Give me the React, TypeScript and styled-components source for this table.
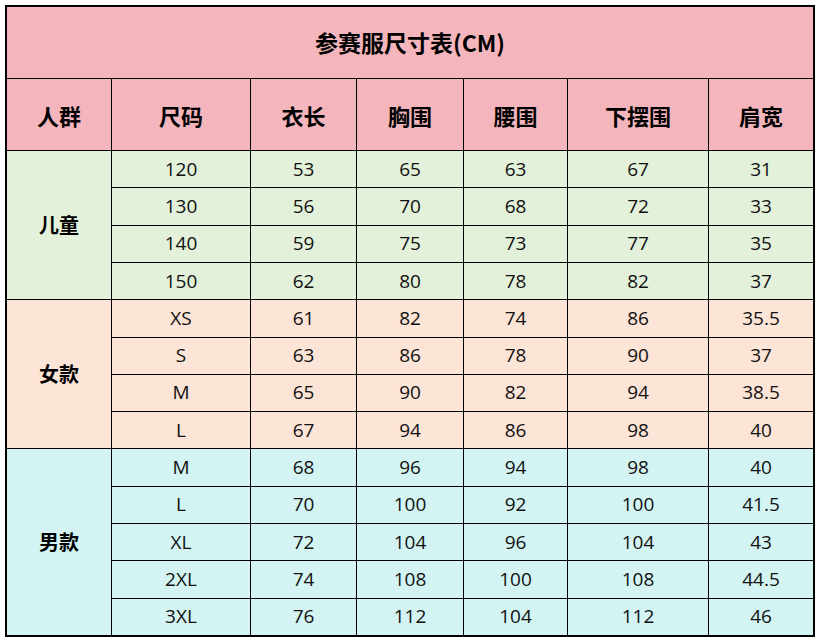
import React from "react";
import styled, { createGlobalStyle } from "styled-components";

const Global = createGlobalStyle`
  html, body { margin: 0; padding: 0; background: #ffffff; }
  body { font-family: "Open Sans", "Noto Sans CJK SC", sans-serif; }
`;

const Page = styled.div`
  padding: 5px 0 0 5px;
`;

const Sheet = styled.div`
  width: 806px;
  height: 628px;
  border: 2px solid #000;
  background: #000;
  display: grid;
  grid-template-columns: 104px 138px 105px 106px 103px 140px 104px;
  grid-template-rows: 71px 71px repeat(13, 1fr);
  gap: 1px;
`;

const Cell = styled.div<{ $bg: string }>`
  background: ${(p) => p.$bg};
  display: flex;
  align-items: center;
  justify-content: center;
  color: #111;
  font-family: "Open Sans", "Noto Sans CJK SC", sans-serif;
  font-size: 19px;
  line-height: 1;
`;

const Title = styled(Cell)`
  grid-column: 1 / -1;
  font-family: "Noto Sans CJK SC", "Open Sans", sans-serif;
  font-weight: 700;
  font-size: 23px;
  color: #000;
`;

const Head = styled(Cell)`
  font-family: "Noto Sans CJK SC", sans-serif;
  font-weight: 700;
  font-size: 22px;
  color: #000;
`;

const Group = styled(Cell)<{ $span: number }>`
  grid-row: span ${(p) => p.$span};
  font-family: "Noto Sans CJK SC", sans-serif;
  font-weight: 700;
  font-size: 20px;
  color: #000;
`;

const PINK = "#f4b6bc";

const headers = ["人群", "尺码", "衣长", "胸围", "腰围", "下摆围", "肩宽"];

const groups: { name: string; bg: string; rows: string[][] }[] = [
  {
    name: "儿童",
    bg: "#e3f0da",
    rows: [
      ["120", "53", "65", "63", "67", "31"],
      ["130", "56", "70", "68", "72", "33"],
      ["140", "59", "75", "73", "77", "35"],
      ["150", "62", "80", "78", "82", "37"],
    ],
  },
  {
    name: "女款",
    bg: "#fce4d6",
    rows: [
      ["XS", "61", "82", "74", "86", "35.5"],
      ["S", "63", "86", "78", "90", "37"],
      ["M", "65", "90", "82", "94", "38.5"],
      ["L", "67", "94", "86", "98", "40"],
    ],
  },
  {
    name: "男款",
    bg: "#d3f4f2",
    rows: [
      ["M", "68", "96", "94", "98", "40"],
      ["L", "70", "100", "92", "100", "41.5"],
      ["XL", "72", "104", "96", "104", "43"],
      ["2XL", "74", "108", "100", "108", "44.5"],
      ["3XL", "76", "112", "104", "112", "46"],
    ],
  },
];

export default function App() {
  return (
    <Page>
      <Global />
      <Sheet>
        <Title $bg={PINK}>参赛服尺寸表(CM)</Title>
        {headers.map((h) => (
          <Head key={h} $bg={PINK}>
            {h}
          </Head>
        ))}
        {groups.map((g) => (
          <React.Fragment key={g.name}>
            <Group $bg={g.bg} $span={g.rows.length} style={{ gridColumn: 1 }}>
              {g.name}
            </Group>
            {g.rows.map((r, i) =>
              r.map((v, j) => (
                <Cell key={`${g.name}-${i}-${j}`} $bg={g.bg}>
                  {v}
                </Cell>
              ))
            )}
          </React.Fragment>
        ))}
      </Sheet>
    </Page>
  );
}
